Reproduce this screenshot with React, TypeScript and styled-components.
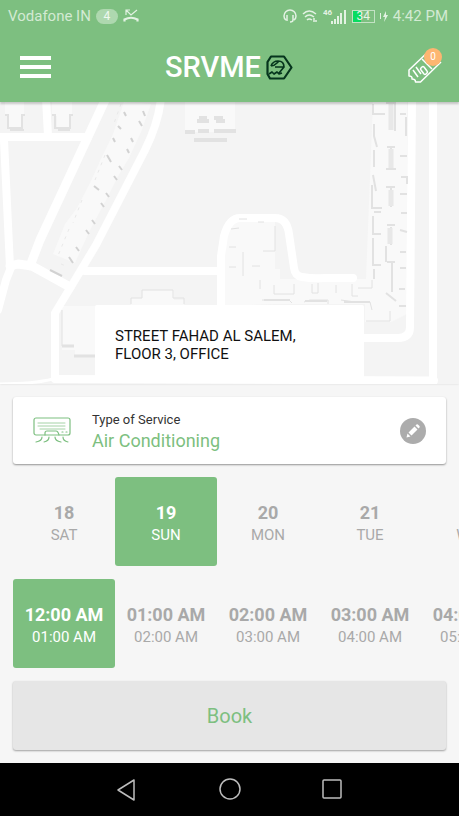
import React, { useState } from "react";
import styled, { createGlobalStyle } from "styled-components";

const green = "#7dbf80";

const GlobalStyle = createGlobalStyle`
  *, *::before, *::after { box-sizing: border-box; }
  html, body, #root { height: 100%; }
  body { margin: 0; background: #f6f6f6; font-family: Roboto, sans-serif; }
  button { border: 0; padding: 0; margin: 0; background: none; font: inherit; cursor: pointer; }
  svg { display: block; flex: none; }
`;

const Screen = styled.div`
  min-height: 100%;
  display: flex;
  flex-direction: column;
  overflow: hidden;
`;

const StatusBar = styled.div`
  display: flex;
  align-items: center;
  justify-content: space-between;
  height: 32px;
  padding: 0 11px 0 8px;
  background: ${green};
  color: #d3ead3;
  font-size: 15px;
  line-height: 20px;
`;

const StatusGroup = styled.div<{ $gap: number }>`
  display: flex;
  align-items: center;
  gap: ${(p) => p.$gap}px;
`;

const CountPill = styled.span`
  width: 22px;
  height: 15px;
  border-radius: 8px;
  background: #aed8af;
  color: #f0f8f0;
  font-size: 12px;
  line-height: 15px;
  text-align: center;
`;

const Battery = styled.span`
  display: flex;
  align-items: center;
  justify-content: center;
  width: 23px;
  height: 13px;
  border: 1px solid #c3e2c4;
  background: linear-gradient(90deg, #08dc60 38%, transparent 38%);
  color: #e6f4e6;
  font-size: 12px;
  line-height: 12px;
`;

const Header = styled.header`
  position: relative;
  z-index: 1;
  display: grid;
  grid-template-columns: 1fr auto 1fr;
  align-items: center;
  height: 70px;
  padding: 0 16px 0 20px;
  background: ${green};
  box-shadow: 0 2px 2px rgba(0, 0, 0, 0.2);
`;

const MenuButton = styled.button`
  display: flex;
  flex-direction: column;
  gap: 5px;
  width: 31px;
  justify-self: start;
`;

const MenuLine = styled.span`
  height: 4px;
  background: #fff;
`;

const Brand = styled.div`
  display: flex;
  align-items: center;
  gap: 5px;
  padding-right: 5px;
  color: #fff;
  font-family: Roboto, sans-serif;
  font-size: 29px;
  font-weight: 500;
  line-height: 36px;
`;

const TicketButton = styled.button`
  position: relative;
  justify-self: end;
  width: 36px;
  height: 38px;
`;

const TicketBadge = styled.span`
  position: absolute;
  top: 0;
  right: 1px;
  width: 18px;
  height: 18px;
  border-radius: 50%;
  background: #fdb671;
  color: #fff;
  font-size: 10px;
  line-height: 18px;
  text-align: center;
`;

const MapArea = styled.section`
  position: relative;
  display: flex;
  flex-direction: column;
  align-items: center;
  justify-content: flex-end;
  height: 282px;
  padding: 0 95px 6px;
  background: #f4f4f4;
  box-shadow: 0 0 2px rgba(0, 0, 0, 0.12);
`;

const MapDrawing = styled.svg`
  position: absolute;
  inset: 0;
  width: 100%;
  height: 100%;
`;

const AddressCard = styled.address`
  position: relative;
  width: 100%;
  padding: 22px 20px 15px;
  border-radius: 2px;
  background: #fff;
  color: #111;
  font-size: 15px;
  font-style: normal;
  line-height: 18px;
`;

const Booking = styled.main`
  flex: 1;
  display: flex;
  flex-direction: column;
  gap: 13px;
  padding: 13px 13px 12px;
`;

const ServiceCard = styled.section`
  display: flex;
  align-items: center;
  height: 67px;
  padding: 0 20px;
  border-radius: 3px;
  background: #fff;
  box-shadow: 0 1px 2px rgba(0, 0, 0, 0.4);
`;

const ServiceText = styled.div`
  flex: 1;
  padding: 2px 20px 0;
`;

const ServiceLabel = styled.div`
  color: #333;
  font-size: 13px;
  line-height: 18px;
`;

const ServiceName = styled.div`
  color: ${green};
  font-size: 18px;
  line-height: 24px;
`;

const EditButton = styled.button`
  display: grid;
  place-items: center;
  width: 26px;
  height: 26px;
  border-radius: 50%;
  background: #acacac;
`;

const SlotRow = styled.div`
  display: flex;
  margin-right: -13px;
  overflow: hidden;
`;

const Slot = styled.button<{ $selected: boolean }>`
  flex: none;
  display: flex;
  flex-direction: column;
  align-items: center;
  justify-content: center;
  width: 102px;
  height: 89px;
  padding-top: 4px;
  border-radius: 3px;
  background: ${(p) => (p.$selected ? green : "transparent")};
  color: ${(p) => (p.$selected ? "#fff" : "#a9a9a9")};
`;

const SlotTitle = styled.span`
  font-size: 18px;
  font-weight: 700;
  line-height: 23px;
`;

const SlotCaption = styled.span`
  font-size: 15px;
  line-height: 22px;
`;

const BookButton = styled.button`
  height: 69px;
  border-radius: 3px;
  background: #e6e6e6;
  box-shadow: 0 1px 2px rgba(0, 0, 0, 0.35);
  color: ${green};
  font-size: 20px;
`;

const NavBar = styled.nav`
  display: flex;
  align-items: center;
  justify-content: center;
  gap: 78px;
  height: 53px;
  background: #000;
`;

const NavButton = styled.button`
  width: 24px;
  height: 24px;
`;

const days = [
  ["18", "SAT"],
  ["19", "SUN"],
  ["20", "MON"],
  ["21", "TUE"],
  ["22", "WED"],
];

const times = [
  ["12:00 AM", "01:00 AM"],
  ["01:00 AM", "02:00 AM"],
  ["02:00 AM", "03:00 AM"],
  ["03:00 AM", "04:00 AM"],
  ["04:00 AM", "05:00 AM"],
];

function SlotPicker({ label, slots, initial }: { label: string; slots: string[][]; initial: number }) {
  const [selected, setSelected] = useState(initial);
  return (
    <SlotRow role="group" aria-label={label}>
      {slots.map(([title, caption], i) => (
        <Slot key={title} type="button" $selected={i === selected} aria-pressed={i === selected} onClick={() => setSelected(i)}>
          <SlotTitle>{title}</SlotTitle>
          <SlotCaption>{caption}</SlotCaption>
        </Slot>
      ))}
    </SlotRow>
  );
}

function StreetMap() {
  return (
    <MapDrawing viewBox="0 102 459 282" preserveAspectRatio="xMidYMid slice" aria-hidden="true">
      <g fill="#f9f9f9">
        <path d="M5 102h19v14h-3v12H8v-12H5zM52 102h20v14h-3v12H57v-12h-5zM185 102h50v30h-50z" />
        <path d="M124 102l27 2-10 28-12 26-12 20-12 24-15 28-15 33-22-9 12-30 12-16 14-27 9-20 13-27z" />
        <path d="M373 102h34v212l-16 8h-26v-18h-90l-50 2v-72l10-15h40v50h5v10h86z" />
        <path d="M62 306h33v50H75v-6H62zM142 290h32v10h10v6h-53v-8h11z" />
      </g>
      <g fill="none" stroke="#fff" strokeLinejoin="round" strokeLinecap="round" strokeWidth="8">
        <path d="M-2 137h90M46 98l2 38M4 140l6 127M12 265l-6 15-8 30" />
        <path d="M106 98L40 240 30 266M10 266l8-2 14 2 38 21" strokeWidth="9" />
        <path d="M161 98c-2 20-8 36-16 52L96 245 72 285 55 313v66M85 271h134" />
        <path d="M221 306v-50l3-20q5-18 16-18h35q12 0 14 16l5 34q1 8 8 9 12 2 22 1h29" />
        <path d="M412 98l-2 229q0 11-12 11h-38M433 98v290" />
        <path d="M56 379l378 1.500" />
      </g>
      <path d="M-2 384q35 0 55-5" fill="none" stroke="#fff" strokeWidth="3" />
      <g fill="none" stroke="#e2e2e2" strokeWidth="3">
        <path d="M5 115h3v13h14v-13h3M52 115h3v13h15v-13h3M10 130h14M58 130h12" strokeWidth="2" />
        <path d="M197 121h12M199 118h8M214 118h9M216 121h9M185 132h10M198 131h11M214 131h22M194 140h33" strokeWidth="4" />
        <path d="M373 104v10h12M386 103h9v28M374 124v12l3 11M374 150v17M373 175l3 16M372 185v23h10M374 212h7M373 216v18h8M373 238v27h8M374 269v10M387 147h8M391 148v20M386 169h10M386 187h9M391 188v19M387 225h8M391 227v18M386 246v16M387 262h8M392 263v29M386 293l10 8M400 114h6M406 117v19M400 156h7M401 177h6v7M400 194h7M401 213h6M400 230l7 2M400 252h6M400 268h6M399 289h6M399 306h7" strokeWidth="2" />
        <path d="M391 104v26M391 149v19M391 190v16M390 228v16" strokeWidth="5" stroke="#e8e8e8" />
        <path d="M231 229l8-1M239 219h8M258 222h6M275 226v16M229 247h7M229 267h7M243 252v24M252 266h8M275 242v9h-12M260 280v9M274 285v9h20v-10M312 284v9h6v-10M336 285v8M352 284v12h6M358 288h14v-8M262 300h27l3 3M304 302l6-2h18v4M341 300l14 2h15l2 8M366 321h24v-10" strokeWidth="1" />
        <path d="M264 300h26M305 301h22M344 302h26" strokeWidth="2" />
        <path d="M62 346h12M74 356h21" />
        <path d="M62 346v-36M131 304v-6h11v-8h31v8h11v6" strokeWidth="1" />
      </g>
      <g fill="none" stroke="#d2d2d2" strokeWidth="2">
        <path d="M124 112l2 4M143 111l2 5M139 121l3 5M118 126l3 3M113 138l2 4M131 138l2 4M127 149l2 4M107 155l4 7M119 166l3 4M114 176l3 4M94 186l5 4M106 193l3 4M101 203l3 4M92 220l3 4M86 230l3 4M76 247l3 4M69 257l4 6M50 270l12 6" />
      </g>
      <path d="M61 264l5 2M121 104l-8 22M105 155l-10 25M82 200l-9 23M69 229l-12 29" fill="none" stroke="#e9e9e9" strokeDasharray="3 5" />
    </MapDrawing>
  );
}

export default function App() {
  return (
    <>
      <GlobalStyle />
      <Screen>
        <StatusBar>
          <StatusGroup $gap={5}>
            <span>Vodafone IN</span>
            <CountPill>4</CountPill>
            <svg width="16" height="14" viewBox="0 0 16 14" fill="none" stroke="#e3f2e3" strokeWidth="1.200">
              <path d="M3 6V1h4M3 1l5 5 6-5" />
              <path d="M1.500 12.500v-2q6.500-3.500 13 0v2" strokeWidth="2.200" />
            </svg>
          </StatusGroup>
          <StatusGroup $gap={5}>
            <svg width="14" height="15" viewBox="0 0 14 15" fill="none" stroke="#e3f2e3" strokeWidth="1.500">
              <path d="M3 11Q1 10 1 7a6 6 0 0 1 12 0q0 3-2 4M4 6v6M10 6v5q0 2-3 2" />
            </svg>
            <svg width="16" height="14" viewBox="0 0 16 14" fill="none" stroke="#e3f2e3" strokeWidth="1.500">
              <path d="M1 5q6-6 13 0M3 8q4-4 9 0M5 11q2-2 5 0M12 9v4M14 11v2" />
            </svg>
            <svg width="24" height="17" viewBox="0 0 24 17" fill="#e3f2e3">
              <text x="0" y="7" fontFamily="Roboto, sans-serif" fontSize="8" fontWeight="700">46</text>
              <path d="M8 13h2v3H8zM11 11h2v5h-2zM14 8h2v8h-2zM17 5h2v11h-2zM21 2h2v14h-2z" />
            </svg>
            <Battery>34</Battery>
            <svg width="8" height="14" viewBox="0 0 8 14" fill="#e3f2e3">
              <path d="M0 4h1v6H0zM6 2L3 8h2l-1 5 4-7H6z" />
            </svg>
            <span>4:42 PM</span>
          </StatusGroup>
        </StatusBar>

        <Header>
          <MenuButton type="button" aria-label="Menu">
            <MenuLine />
            <MenuLine />
            <MenuLine />
          </MenuButton>
          <Brand>
            SRVME
            <svg width="27" height="25" viewBox="0 0 27 25" fill="none" stroke="#06351d" strokeWidth="2.200" strokeLinejoin="round">
              <path d="M5 1.500h13L25.500 12.500 18 23.500H4L1.500 19V7z" />
              <path d="M5 11q2-5 7-5 6 0 6 6H9M5 11q3 0 6-3l2-2M18 12l-5 6M3 19l3-2 2 2 3-2 2 2 3-1" strokeWidth="1.700" />
            </svg>
          </Brand>
          <TicketButton type="button" aria-label="Tickets">
            <svg width="36" height="38" viewBox="0 0 36 38" fill="none" stroke="#fff" strokeWidth="1.500" strokeLinejoin="round">
              <path d="M22 3L2 22v6q3.500 0 3 3 3.500 0 3.500 3h5L34 14" />
              <path d="M6 22l5 7M9 19l5 7M15 19q1-1 2 0l3 4q1 1 0 2l-1 1q-1 1-2 0l-3-4q-1-1 0-2zM15 11l10 10" />
            </svg>
            <TicketBadge>0</TicketBadge>
          </TicketButton>
        </Header>

        <MapArea>
          <StreetMap />
          <AddressCard>
            STREET FAHAD AL SALEM,
            <br />
            FLOOR 3, OFFICE
          </AddressCard>
        </MapArea>

        <Booking>
          <ServiceCard>
            <svg width="39" height="27" viewBox="0 0 39 27" fill="none" stroke={green} strokeWidth="1.200" strokeLinecap="round">
              <rect x="1" y="1" width="36" height="17" rx="2" />
              <path d="M5 6h27M5 9h27M7 12h25" strokeWidth="1" opacity=".7" />
              <path d="M12 18v-2q0-2 2-2h9q2 0 3 4M29 15h1M33 15h1" />
              <path d="M9 20q0 4-6 5M16 20q0 4-5 5M22 20q0 4 6 5M30 20q0 4 5 5" />
            </svg>
            <ServiceText>
              <ServiceLabel>Type of Service</ServiceLabel>
              <ServiceName>Air Conditioning</ServiceName>
            </ServiceText>
            <EditButton type="button" aria-label="Edit service">
              <svg width="14" height="14" viewBox="0 0 14 14" fill="#fff">
                <path d="M.5 13.500L1.500 9.500l3 3zM2.500 8.500L8.500 2.500 11.500 5.500 5.500 11.500zM9.500 1.500l1-1q.7-.5 1.400 0l1.600 1.600q.5.700 0 1.400l-1 1z" />
              </svg>
            </EditButton>
          </ServiceCard>
          <SlotPicker label="Day" slots={days} initial={1} />
          <SlotPicker label="Time" slots={times} initial={0} />
          <BookButton type="button">Book</BookButton>
        </Booking>

        <NavBar>
          <NavButton type="button" aria-label="Back">
            <svg width="24" height="24" viewBox="0 0 24 24" fill="none" stroke="#bdbdbd" strokeWidth="1.500" strokeLinejoin="round">
              <path d="M18 2v20L2 12z" />
            </svg>
          </NavButton>
          <NavButton type="button" aria-label="Home">
            <svg width="24" height="24" viewBox="0 0 24 24" fill="none" stroke="#bdbdbd" strokeWidth="1.500">
              <circle cx="12" cy="11" r="10" />
            </svg>
          </NavButton>
          <NavButton type="button" aria-label="Recent apps">
            <svg width="24" height="24" viewBox="0 0 24 24" fill="none" stroke="#bdbdbd" strokeWidth="1.500">
              <rect x="3" y="2" width="18" height="18" rx="1" />
            </svg>
          </NavButton>
        </NavBar>
      </Screen>
    </>
  );
}
